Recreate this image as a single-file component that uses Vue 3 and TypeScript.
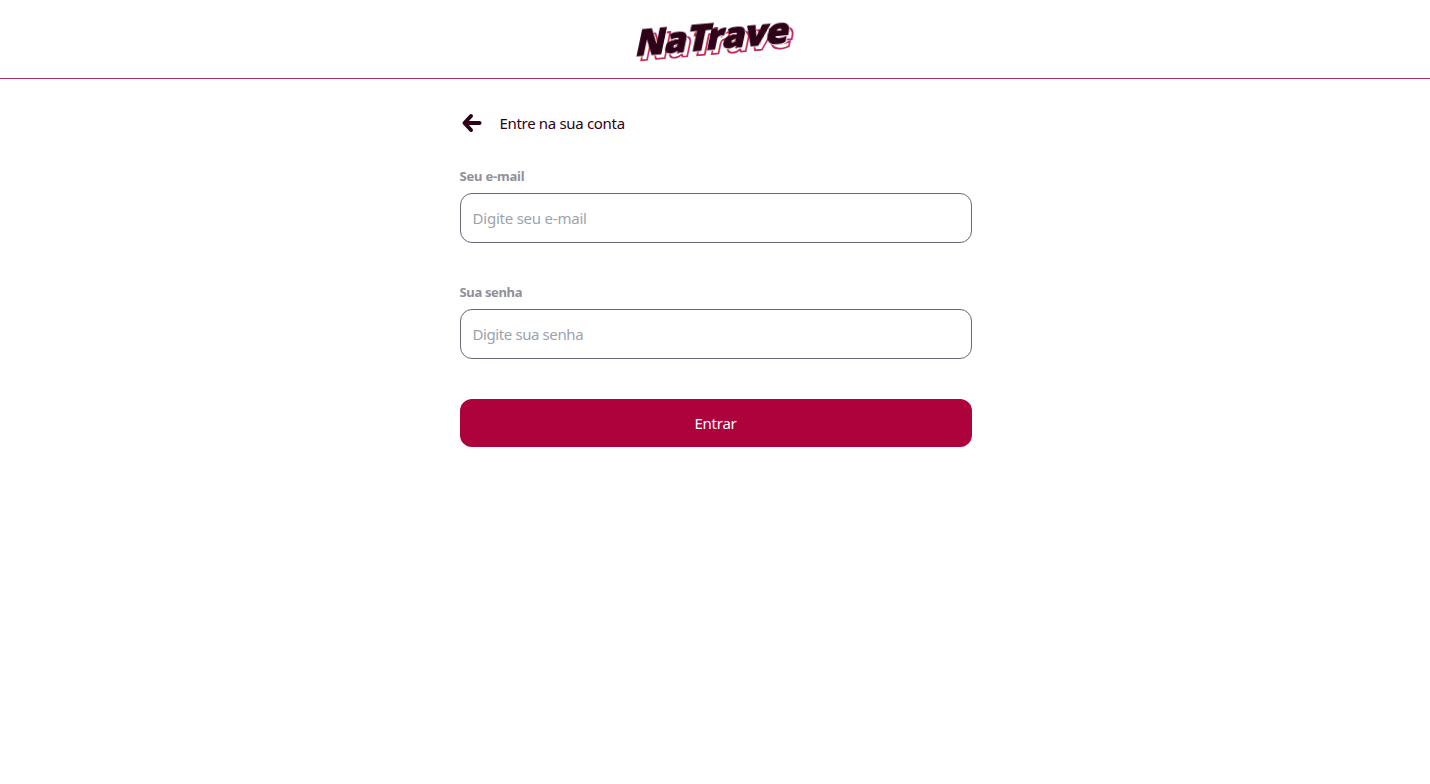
<script setup lang="ts">
import { ref } from 'vue'

interface Glyph {
  char: string
  x: number
  width: number
}

const email = ref('')
const password = ref('')

const glyphs: Glyph[] = [
  { char: 'N', x: -2, width: 29 },
  { char: 'a', x: 27, width: 22 },
  { char: 'T', x: 49, width: 23 },
  { char: 'r', x: 69, width: 16.5 },
  { char: 'a', x: 85, width: 22.5 },
  { char: 'v', x: 107, width: 22 },
  { char: 'e', x: 128, width: 23 },
]
</script>

<template>
  <div class="page">
    <header class="header">
      <svg class="logo" width="160" height="44" viewBox="0 0 160 44" role="img" aria-label="NaTrave">
        <g transform="translate(5.5 41.4) skewY(-5) skewX(-12)" class="logo-shadow">
          <text v-for="(g, i) in glyphs" :key="i" :x="g.x" y="0" :textLength="g.width" lengthAdjust="spacingAndGlyphs">{{ g.char }}</text>
        </g>
        <g transform="translate(1.5 37) skewY(-5) skewX(-12)" class="logo-front">
          <text v-for="(g, i) in glyphs" :key="i" :x="g.x" y="0" :textLength="g.width" lengthAdjust="spacingAndGlyphs">{{ g.char }}</text>
        </g>
      </svg>
    </header>
    <main class="content">
      <div class="heading">
        <a class="back" href="#" aria-label="Voltar">
          <svg width="24" height="24" viewBox="0 0 24 24">
            <path d="M19.5 12H5M11 5L4.5 12L11 19" />
          </svg>
        </a>
        <h1 class="title">Entre na sua conta</h1>
      </div>
      <form class="form" @submit.prevent>
        <div class="field">
          <label for="email" class="label-email">Seu e-mail</label>
          <input id="email" v-model="email" type="email" placeholder="Digite seu e-mail" />
        </div>
        <div class="field">
          <label for="password">Sua senha</label>
          <input id="password" v-model="password" type="password" placeholder="Digite sua senha" />
        </div>
        <button type="submit">Entrar</button>
      </form>
    </main>
  </div>
</template>

<style>
body {
  margin: 0;
  background: #fff;
}
</style>

<style scoped>
.page {
  min-height: 784px;
  font-family: "Noto Sans", "Open Sans", sans-serif;
  font-size: 16px;
  line-height: 24px;
  color: #2f0118;
}
.header {
  box-sizing: border-box;
  height: 79px;
  display: flex;
  justify-content: center;
  padding-top: 19px;
  border-bottom: 1px solid #bb2f5c;
}
.logo {
  overflow: visible;
  font-family: "Open Sans", sans-serif;
  font-size: 36px;
  font-weight: 800;
}
.logo-shadow {
  fill: #fff;
  stroke: #c6295e;
  stroke-width: 1.7;
}
.logo-front {
  fill: #2f0118;
  stroke: #2f0118;
  stroke-width: 1.2;
  filter: drop-shadow(1px 1px 0 #fff);
}
.content {
  width: 512px;
  margin: 0 auto;
  padding: 32px 0 0 1px;
}
.heading {
  display: flex;
  align-items: center;
  gap: 16px;
}
.back {
  display: flex;
}
.back path {
  fill: none;
  stroke: #2f0118;
  stroke-width: 4;
  stroke-linecap: round;
  stroke-linejoin: round;
}
.title {
  margin: 0;
  font-size: 15px;
  line-height: 24px;
  font-weight: 400;
  letter-spacing: -0.32px;
}
.form {
  display: flex;
  flex-direction: column;
  gap: 40px;
  margin-top: 32px;
}
.field {
  display: flex;
  flex-direction: column;
  gap: 8px;
}
label {
  font-size: 13px;
  line-height: 18px;
  font-weight: 700;
  letter-spacing: -0.35px;
  color: #8f919a;
}
.label-email {
  letter-spacing: -0.2px;
}
input {
  box-sizing: border-box;
  width: 100%;
  height: 50px;
  padding: 12px;
  border: 1px solid #696875;
  border-radius: 12px;
  outline: 0;
  background: #fff;
  font: inherit;
  font-size: 15px;
  letter-spacing: -0.22px;
  color: #2f0118;
}
#password {
  letter-spacing: -0.4px;
}
input::placeholder {
  color: #9ca3af;
  opacity: 1;
}
button {
  height: 48px;
  padding: 0;
  border: 0;
  border-radius: 12px;
  background: #ad023c;
  color: #fff;
  font: inherit;
  font-size: 15px;
  letter-spacing: -0.25px;
}
</style>
